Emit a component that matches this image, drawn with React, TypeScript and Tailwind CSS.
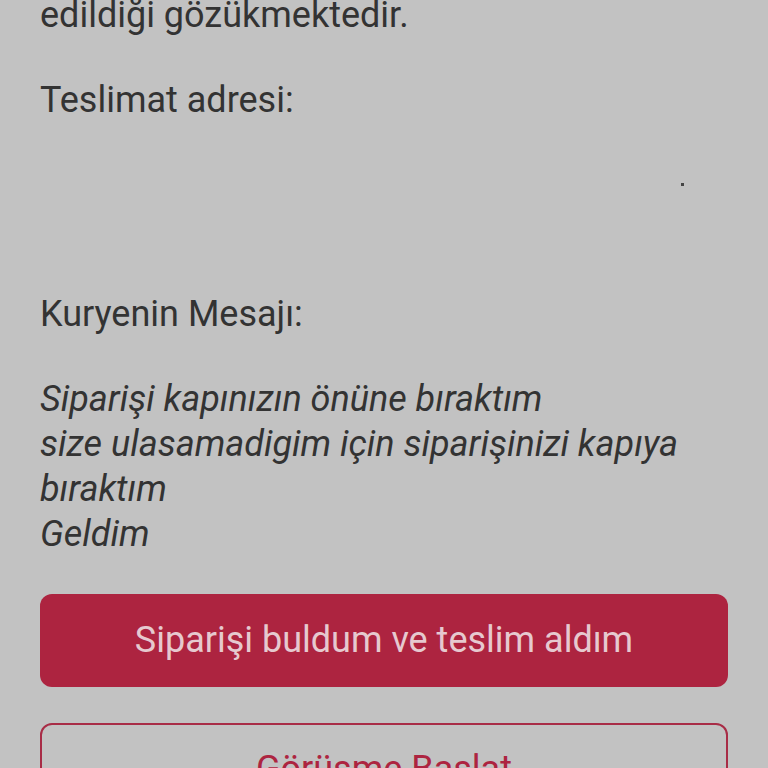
export default function App() {
  return (
    <div className="w-[768px] h-[768px] overflow-hidden bg-[#c2c2c2] text-[#333333]" style={{ fontFamily: "Roboto, 'Noto Sans', sans-serif" }}>
      <div className="px-10 pt-[1px] mt-[-8px] text-[36px] leading-[45px]">
        <p>edildiği gözükmektedir.</p>
        <p className="mt-[40px]">Teslimat adresi:</p>
        <div className="relative h-[169px]">
          <span className="absolute left-[641px] top-[60px] w-[3px] h-[3px] bg-[#444]"></span>
        </div>
        <p>Kuryenin Mesajı:</p>
        <div className="mt-[40px] italic pr-[20px]">
          <p>Siparişi kapınızın önüne bıraktım</p>
          <p>size ulasamadigim için siparişinizi kapıya bıraktım</p>
          <p>Geldim</p>
        </div>
        <button className="mt-[37px] w-full h-[93px] rounded-[12px] bg-[#ad2440] text-[#e6c9cf] text-[36px]">
          Siparişi buldum ve teslim aldım
        </button>
        <button className="mt-[36px] w-full h-[93px] rounded-[12px] border-2 border-[#a82c46] text-[#ad2440] text-[36px]">
          Görüşme Başlat
        </button>
      </div>
    </div>
  );
}
